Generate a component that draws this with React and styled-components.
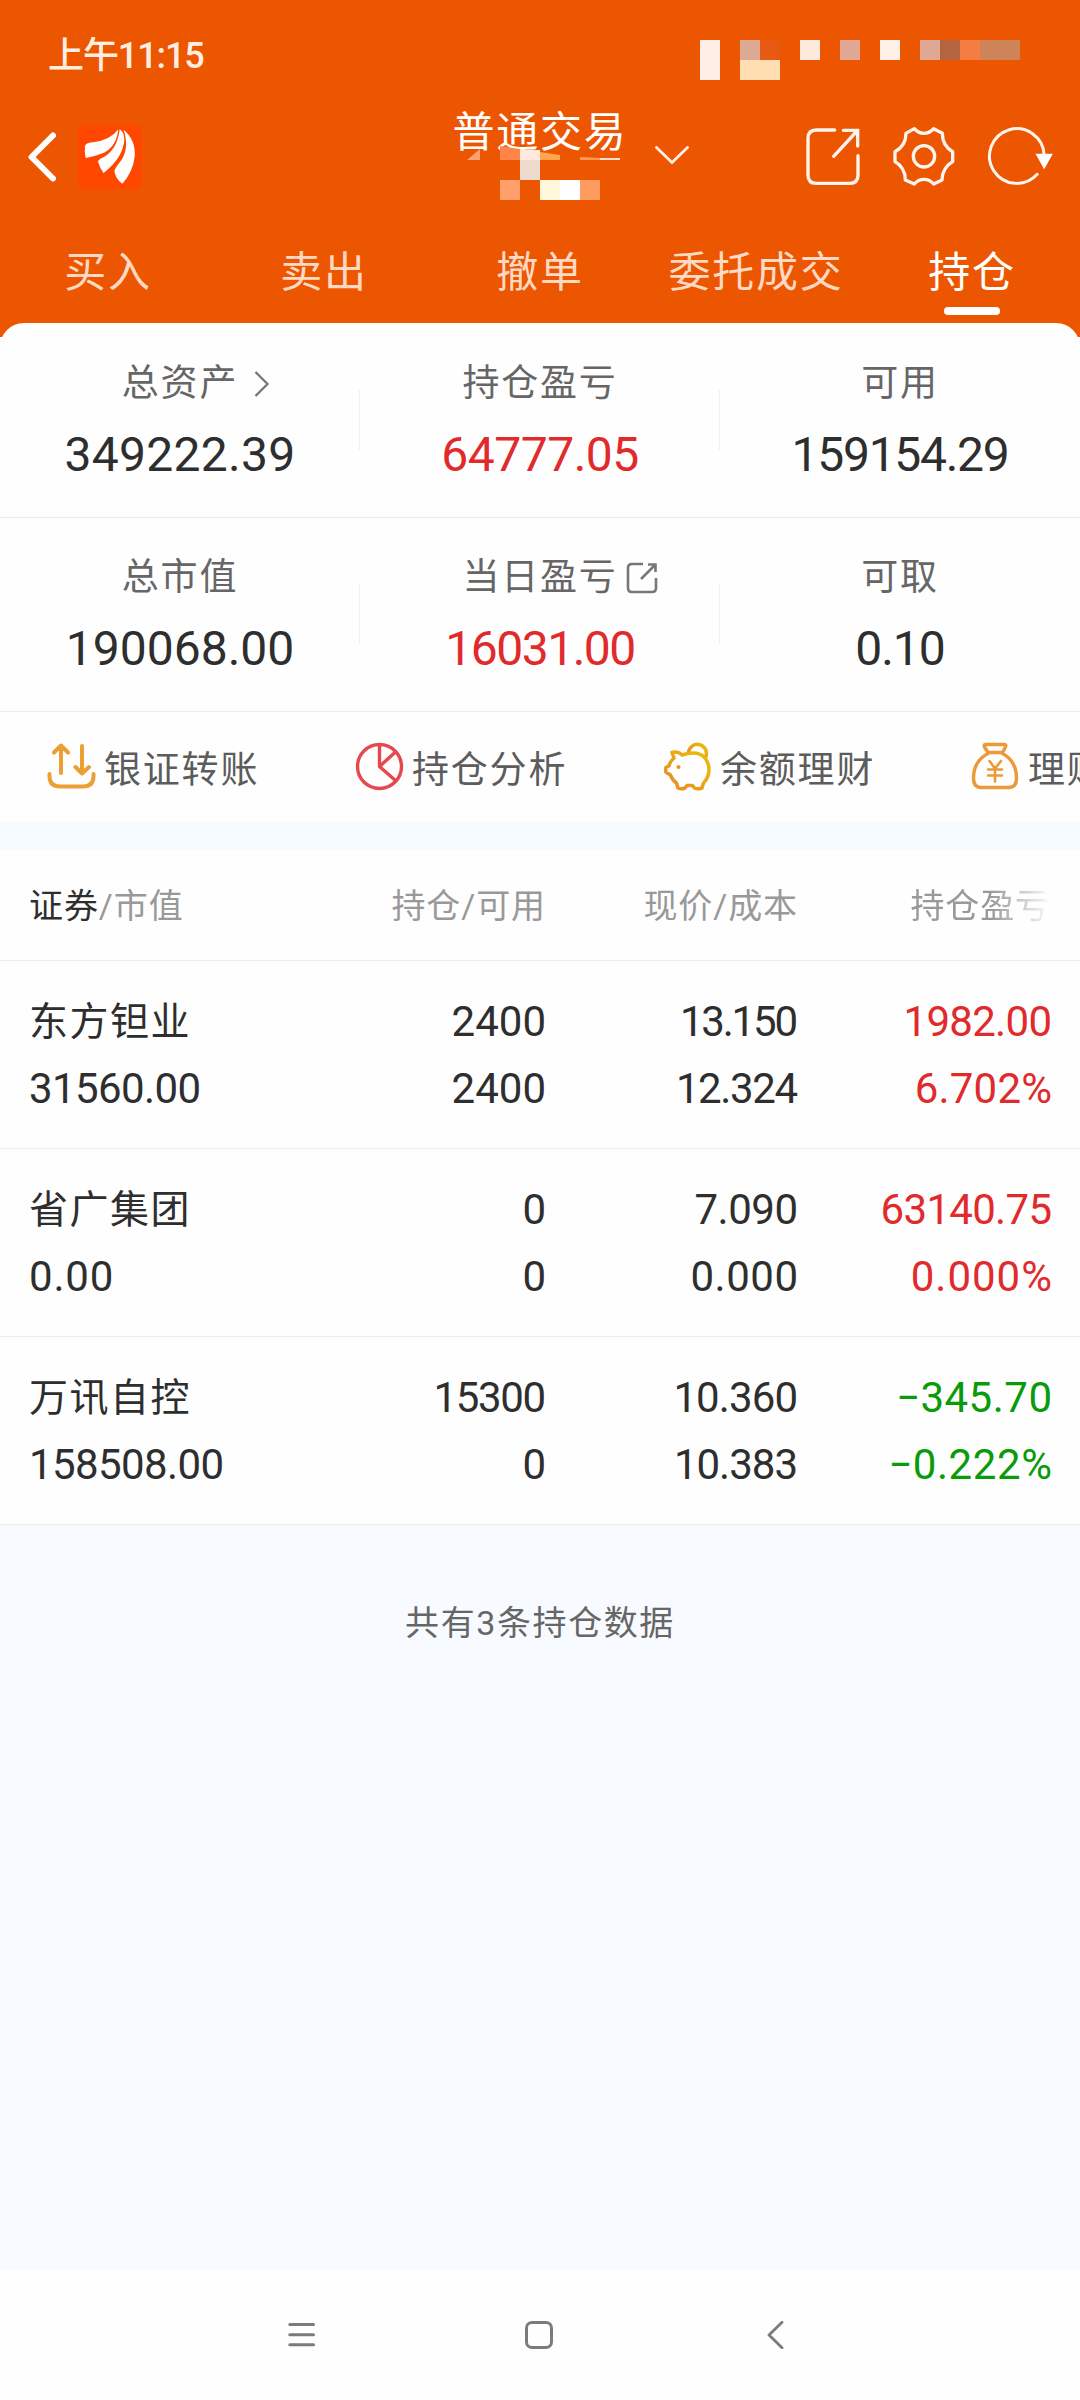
import React from "react";
import styled, { createGlobalStyle } from "styled-components";

const metrics = [
    [
        { label: "总资产", value: "349222.39", spacing: 0.3, icon: "arrow" },
        { label: "持仓盈亏", value: "64777.05", spacing: -0.5, color: "#e12a2c" },
        { label: "可用", value: "159154.29", spacing: -1.3 },
    ],
    [
        { label: "总市值", value: "190068.00", spacing: 0 },
        { label: "当日盈亏", value: "16031.00", spacing: -1.5, color: "#e12a2c", icon: "share" },
        { label: "可取", value: "0.10", spacing: -1 },
    ],
];

const actions = [
    { label: "银证转账", icon: <TransferIcon /> },
    { label: "持仓分析", icon: <PieIcon /> },
    { label: "余额理财", icon: <PiggyIcon /> },
    { label: "理财", icon: <BagIcon /> },
];

// each cell is [first line, its spacing, second line, its spacing]
const holdings = [
    {
        name: "东方钽业",
        value: ["31560.00", -0.6],
        amount: ["2400", 0, "2400", 0],
        price: ["13.150", -2.2, "12.324", -1.4],
        profit: ["1982.00", -0.7, "6.702%", 0.2],
        color: "#e12a2c",
    },
    {
        name: "省广集团",
        value: ["0.00", 0.8],
        amount: ["0", 0, "0", 0],
        price: ["7.090", -0.5, "0.000", 0.5],
        profit: ["63140.75", -0.7, "0.000%", 1],
        color: "#e12a2c",
    },
    {
        name: "万讯自控",
        value: ["158508.00", -0.6],
        amount: ["15300", -1.4, "0", 0],
        price: ["10.360", -0.9, "10.383", -1],
        profit: ["−345.70", 0.5, "−0.222%", 0.6],
        color: "#0a9b0a",
    },
];

const tabs = ["买入", "卖出", "撤单", "委托成交", "持仓"];

function App() {
    return (
        <>
            <GlobalStyle />
            <Page>
                <Header>
                    <StatusBar>
                        <Clock>上午11:15</Clock>
                        <StatusBlocks />
                    </StatusBar>
                    <NavBar>
                        <NavLeft>
                            <BackIcon />
                            <Logo />
                        </NavLeft>
                        <TitleBox>
                            <Title>普通交易</Title>
                            <TitleBlocks />
                            <DownIcon />
                        </TitleBox>
                        <NavRight>
                            <ShareIcon />
                            <GearIcon />
                            <RefreshIcon />
                        </NavRight>
                    </NavBar>
                    <Tabs>
                        {tabs.map((tab) => (
                            <Tab key={tab} $active={tab === "持仓"}>
                                {tab}
                            </Tab>
                        ))}
                    </Tabs>
                </Header>
                <Card>
                    {metrics.map((row, i) => (
                        <MetricRow key={i}>
                            {row.map((item) => (
                                <Metric key={item.label}>
                                    <MetricLabel>
                                        {item.label}
                                        {item.icon === "arrow" && <RightIcon />}
                                        {item.icon === "share" && <SmallShareIcon />}
                                    </MetricLabel>
                                    <MetricValue $color={item.color} $spacing={item.spacing}>
                                        {item.value}
                                    </MetricValue>
                                </Metric>
                            ))}
                        </MetricRow>
                    ))}
                    <Actions>
                        {actions.map((action) => (
                            <Action key={action.label}>
                                {action.icon}
                                {action.label}
                            </Action>
                        ))}
                    </Actions>
                </Card>
                <Gap />
                <TableHead>
                    <HeadCell>
                        <Strong>证券</Strong>/市值
                    </HeadCell>
                    <HeadCell>持仓/可用</HeadCell>
                    <HeadCell>现价/成本</HeadCell>
                    <HeadCell $fade>持仓盈亏</HeadCell>
                </TableHead>
                {holdings.map((item) => (
                    <TableRow key={item.name}>
                        <Cell>
                            <Name>{item.name}</Name>
                            <Num $spacing={item.value[1]}>{item.value[0]}</Num>
                        </Cell>
                        <NumCell data={item.amount} />
                        <NumCell data={item.price} />
                        <NumCell data={item.profit} color={item.color} />
                    </TableRow>
                ))}
                <Footer>共有3条持仓数据</Footer>
                <SystemBar>
                    <svg width="28" height="28" viewBox="0 0 28 28" stroke="#7b7b7b" strokeWidth="3" strokeLinecap="round">
                        <path d="M1.8 3.5H25.5M1.8 13.8H25.5M1.8 23.8H25.5" />
                    </svg>
                    <svg width="28" height="28" viewBox="0 0 28 28" fill="none" stroke="#7b7b7b" strokeWidth="3">
                        <rect x="1.5" y="1.5" width="25" height="25" rx="5.5" />
                    </svg>
                    <svg width="28" height="28" viewBox="0 0 28 28" fill="none" stroke="#7b7b7b" strokeWidth="2.8" strokeLinecap="round" strokeLinejoin="round">
                        <path d="M20 1.3L7 14L20 26.7" />
                    </svg>
                </SystemBar>
            </Page>
        </>
    );
}

function NumCell({ data, color }) {
    return (
        <Cell $right $color={color}>
            <Num $spacing={data[1]}>{data[0]}</Num>
            <Num $spacing={data[3]}>{data[2]}</Num>
        </Cell>
    );
}

function StatusBlocks() {
    return (
        <StatusSvg width="320" height="40" shapeRendering="crispEdges">
            <rect x="0" width="20" height="40" fill="#ffeee6" />
            <rect x="40" width="20" height="20" fill="#dba994" />
            <rect x="60" width="20" height="20" fill="#e85a14" />
            <rect x="40" y="20" width="40" height="20" fill="#ffdfb2" />
            <rect x="100" width="20" height="20" fill="#fee9dd" />
            <rect x="140" width="20" height="20" fill="#e0a892" />
            <rect x="180" width="20" height="20" fill="#fff0e5" />
            <rect x="220" width="20" height="20" fill="#dfa892" />
            <rect x="240" width="20" height="20" fill="#b4643e" />
            <rect x="260" width="20" height="20" fill="#f47d42" />
            <rect x="280" width="40" height="20" fill="#cd8459" />
        </StatusSvg>
    );
}

function TitleBlocks() {
    return (
        <TitleSvg width="160" height="60" viewBox="465 140 160 60">
            <path d="M467 160L480 149V160Z" fill="#ffa070" />
            <path d="M500 146L520 149V160H500Z" fill="#ff8447" />
            <path d="M540 152L560 155V160H540Z" fill="#ffa64e" />
            <path d="M580 157L600 158V160H580Z" fill="#ff9a55" />
            <path d="M600 158H620V160H600Z" fill="#ffe0cc" />
            <rect x="520" y="150" width="20" height="10" fill="#ffeadc" />
            <rect x="520" y="160" width="20" height="20" fill="#efdace" />
            <rect x="500" y="180" width="20" height="20" fill="#ff9f6b" />
            <rect x="540" y="180" width="20" height="20" fill="#fff7dc" />
            <rect x="560" y="180" width="20" height="20" fill="#ffffff" />
            <rect x="580" y="180" width="20" height="20" fill="#fd9b60" />
        </TitleSvg>
    );
}

function BackIcon() {
    return (
        <svg width="28" height="50" viewBox="0 0 28 50" fill="none" stroke="#fff" strokeWidth="6" strokeLinecap="round" strokeLinejoin="round">
            <path d="M25 3.5L3.5 25L25 46.5" />
        </svg>
    );
}

function Logo() {
    return (
        <svg width="64" height="64" viewBox="237 375 192 192">
            <rect x="237" y="375" width="192" height="192" rx="14" fill="#ff4700" />
            <g fill="#fff">
                <path d="M258 437Q262 428 283 427Q335 420 358 388Q352 440 315 458Q295 466 260 474Q256 455 258 437Z" />
                <path d="M362 388Q380 398 375 430Q366 470 340 495Q325 510 314 519Q302 505 297 484Q300 477 315 471Q355 448 362 388Z" />
                <path d="M374 389Q411 420 407 470Q402 515 370 551Q350 538 346 512Q350 502 360 490Q394 450 374 389Z" />
            </g>
        </svg>
    );
}

function DownIcon() {
    return (
        <DownSvg width="34" height="20" viewBox="0 0 34 20" fill="none" stroke="#ffeee4" strokeWidth="2.8" strokeLinecap="round">
            <path d="M1.5 1.5L17 16.5L32.5 1.5" />
        </DownSvg>
    );
}

function ShareIcon() {
    return (
        <svg width="56" height="60" viewBox="374 374 168 180" fill="none" stroke="#fff4ee" strokeWidth="10" strokeLinecap="round">
            <path d="M463 386H408Q383 386 383 411V521Q383 546 408 546H508Q533 546 533 521V463" />
            <path d="M489 387H532V434M530 389L460 465" />
        </svg>
    );
}

function GearIcon() {
    return (
        <svg width="64" height="62" viewBox="638 371 192 186" fill="none" stroke="#fff4ee" strokeWidth="10" strokeLinejoin="round">
            <path d="M705 382Q717 396 734 396Q751 396 763 382L789 396Q789 434 820 451V481Q789 499 788 536L763 548Q751 534 734 534Q717 534 705 548L678 536Q678 499 647 481V451Q680 434 680 396Z" />
            <circle cx="734" cy="465" r="32" />
        </svg>
    );
}

function RefreshIcon() {
    return (
        <svg width="67" height="60" viewBox="918 377 200 180">
            <path d="M1068 522A82 82 0 1 1 1089 464" fill="none" stroke="#fff4ee" strokeWidth="9" strokeLinecap="round" />
            <path d="M1063 460H1115L1089 507Z" fill="#fff" />
        </svg>
    );
}

function RightIcon() {
    return (
        <LabelSvg width="16" height="26" viewBox="0 0 16 26" fill="none" stroke="#777" strokeWidth="2.3" $left={16} $right={-32}>
            <path d="M1.5 1L13.5 13L1.5 25" />
        </LabelSvg>
    );
}

function SmallShareIcon() {
    return (
        <LabelSvg width="32" height="32" viewBox="0 0 32 32" fill="none" stroke="#777" strokeWidth="2.6" $left={8} $right={-40}>
            <path d="M17 2H6Q2 2 2 6V26Q2 30 6 30H26Q30 30 30 26V16" />
            <path d="M22 2.5H29.500V10M29.500 2.500L15 17" />
        </LabelSvg>
    );
}

function TransferIcon() {
    return (
        <svg width="50" height="50" viewBox="46 742 50 50" fill="none" stroke="#eb9f34" strokeWidth="4" strokeLinecap="round" strokeLinejoin="round">
            <path d="M61 773V746M54 752.5L61 745.5L68 752.5M82 746V773M75.5 767L82 773.5L89 767" />
            <path d="M49.5 774V776Q49.5 786.5 60 786.5H83Q93.5 786.5 93.5 776V774" />
        </svg>
    );
}

function PieIcon() {
    return (
        <svg width="50" height="50" viewBox="354 742 50 50" fill="none" stroke="#e5484f" strokeWidth="3.4" strokeLinejoin="round">
            <circle cx="379.5" cy="766.5" r="22" />
            <path d="M379.5 745V766.5L396 751.5M379.5 766.5L396 781" />
        </svg>
    );
}

function PiggyIcon() {
    return (
        <svg width="50" height="50" viewBox="662 742 50 50" fill="none" stroke="url(#gold)" strokeWidth="3.5" strokeLinejoin="round" strokeLinecap="round">
            <defs>
                <linearGradient id="gold" x1="0" y1="1" x2="1" y2="0">
                    <stop offset="0.2" stopColor="#ec9126" />
                    <stop offset="0.8" stopColor="#eab60d" />
                </linearGradient>
            </defs>
            <path d="M688.5 753A9 9 0 1 1 705.5 757.5" />
            <path d="M672 752.5Q678 751 682 755Q698 750 705 758Q711 766 708 776Q706 781 703.5 783L702 788Q698 789.5 694.5 788L692.5 785.5H687L685 788Q681 789.5 678 788L676.5 783Q672 780 670.5 775L665.8 772V767.5L669 766Q669.5 762 674 758Z" />
            <circle cx="678.5" cy="767" r="2" fill="#ec9126" stroke="none" />
        </svg>
    );
}

function BagIcon() {
    return (
        <svg width="50" height="50" viewBox="970 742 50 50" fill="none" stroke="#ec9a38" strokeWidth="3.4" strokeLinejoin="round" strokeLinecap="round">
            <path d="M985.5 744.5H1004.5Q1006.5 744.5 1005.5 747L1002.5 752.5H988L984.5 747Q983.5 744.5 985.5 744.5Z" />
            <path d="M988 753.5Q973.5 761 973.5 778Q973.5 787.5 981 787.5H1009Q1016.5 787.5 1016.5 778Q1016.5 761 1002.5 753.5" />
            <path d="M989.5 761L995 768.5L1001 761M995 769V781.5M988 769.5H1002M988 775.5H1002" strokeWidth="2.6" />
        </svg>
    );
}

export default App;

const GlobalStyle = createGlobalStyle`
    body {
        margin: 0;
        background: #fdfdfd;
        font-family: Roboto, "Noto Sans CJK SC", sans-serif;
    }
`;
const Page = styled.div`
    width: 1080px;
    height: 2400px;
    display: flex;
    flex-direction: column;
    overflow: hidden;
    background: #f7fbff;
`;
const Header = styled.div`
    height: 337px;
    flex-shrink: 0;
    background: #ed5600;
`;
const StatusBar = styled.div`
    height: 110px;
    display: flex;
    align-items: center;
    justify-content: space-between;
    padding: 0 60px 0 48px;
    box-sizing: border-box;
`;
const Clock = styled.div`
    margin-top: 2px;
    font-size: 36px;
    font-weight: 500;
    line-height: 40px;
    letter-spacing: -1.1px;
    color: #ffeee2;
`;
const StatusSvg = styled.svg`
    margin-top: 10px;
`;
const NavBar = styled.div`
    height: 92px;
    display: grid;
    grid-template-columns: 400px 280px 400px;
    grid-template-rows: 92px;
`;
const NavLeft = styled.div`
    display: flex;
    align-items: center;
    gap: 22px;
    padding: 2px 0 0 28px;
`;
const TitleBox = styled.div`
    position: relative;
    display: flex;
    align-items: center;
    justify-content: center;
    height: 92px;
    padding-bottom: 46px;
    box-sizing: border-box;
`;
const Title = styled.div`
    font-size: 42px;
    line-height: 44px;
    letter-spacing: 1.8px;
    color: #fff;
`;
const TitleSvg = styled.svg`
    position: absolute;
    left: 65px;
    top: 30px;
`;
const DownSvg = styled.svg`
    margin: 46px -61px 0 27px;
`;
const NavRight = styled.div`
    display: flex;
    align-items: center;
    justify-content: flex-end;
    gap: 31px;
    padding-right: 26px;
`;
const Tabs = styled.div`
    height: 121px;
    display: grid;
    grid-template-columns: repeat(5, 1fr);
`;
const Tab = styled.div`
    display: flex;
    flex-direction: column;
    align-items: center;
    justify-content: flex-end;
    gap: 12px;
    padding-bottom: 8px;
    font-size: 42px;
    line-height: 44px;
    letter-spacing: 1.8px;
    color: ${(props) => (props.$active ? "#fff" : "#ffd9c4")};

    &::after {
        content: "";
        width: 56px;
        height: 8px;
        border-radius: 4px;
        background: ${(props) => (props.$active ? "#fff" : "transparent")};
    }
`;
const Card = styled.div`
    height: 499px;
    flex-shrink: 0;
    margin-top: -14px;
    padding-top: 1px;
    box-sizing: border-box;
    border-radius: 24px 24px 0 0;
    background: #fefefe;
`;
const MetricRow = styled.div`
    height: 194px;
    display: grid;
    grid-template-columns: repeat(3, 1fr);
    box-sizing: border-box;
    border-bottom: 1px solid #ebebeb;
`;
const Metric = styled.div`
    display: flex;
    flex-direction: column;
    align-items: center;
    padding-top: 38px;
    background: linear-gradient(#f0f0f0, #f0f0f0) no-repeat right 66px / 1px 60px;

    &:last-child {
        background: none;
    }
`;
const MetricLabel = styled.div`
    display: flex;
    align-items: center;
    font-size: 37px;
    line-height: 44px;
    letter-spacing: 1.8px;
    color: #666;
`;
const LabelSvg = styled.svg`
    margin-left: ${(props) => props.$left}px;
    margin-right: ${(props) => props.$right}px;
`;
const MetricValue = styled.div`
    margin-top: 21px;
    font-size: 48px;
    line-height: 56px;
    letter-spacing: ${(props) => props.$spacing}px;
    color: ${(props) => props.$color || "#2e2e2e"};
`;
const Actions = styled.div`
    height: 110px;
    display: flex;
    padding-left: 46px;
    overflow: hidden;
`;
const Action = styled.div`
    width: 308px;
    flex-shrink: 0;
    display: flex;
    align-items: center;
    gap: 8px;
    font-size: 37px;
    letter-spacing: 1.8px;
    white-space: nowrap;
    color: #5c5c5c;
`;
const Gap = styled.div`
    height: 28px;
    flex-shrink: 0;
    background: #f5faff;
`;
const TableHead = styled.div`
    height: 111px;
    flex-shrink: 0;
    display: grid;
    grid-template-columns: 267px 250px 252px 254px;
    align-items: center;
    padding: 1px 28px 0 29px;
    box-sizing: border-box;
    border-bottom: 1px solid #ebebeb;
    background: #fefefe;
`;
const HeadCell = styled.div`
    font-size: 34px;
    letter-spacing: 0.9px;
    line-height: 44px;
    color: #999;
    text-align: right;
    padding-right: ${(props) => (props.$fade ? 2 : 0)}px;
    mask-image: ${(props) =>
        props.$fade ? "linear-gradient(to right, #000 76%, transparent 100%)" : "none"};

    &:first-child {
        text-align: left;
    }
`;
const Strong = styled.span`
    color: #2e2e2e;
`;
const TableRow = styled.div`
    height: 188px;
    flex-shrink: 0;
    display: grid;
    grid-template-columns: 267px 250px 252px 254px;
    padding: 27px 28px 0 29px;
    box-sizing: border-box;
    border-bottom: 1px solid #ebecee;
    background: #fefefe;
`;
const Cell = styled.div`
    display: flex;
    flex-direction: column;
    align-items: ${(props) => (props.$right ? "flex-end" : "flex-start")};
    color: ${(props) => props.$color || "#2e2e2e"};
`;
const Name = styled.div`
    padding-top: 1px;
    font-size: 39px;
    line-height: 66px;
    letter-spacing: 1.5px;
`;
const Num = styled.div`
    font-size: 42px;
    line-height: 67px;
    letter-spacing: ${(props) => props.$spacing}px;
    margin-right: ${(props) => -props.$spacing}px;
`;
const Footer = styled.div`
    flex: 1;
    padding-top: 76px;
    font-size: 34px;
    line-height: 44px;
    letter-spacing: 1.6px;
    text-align: center;
    color: #666;
`;
const SystemBar = styled.div`
    height: 130px;
    flex-shrink: 0;
    display: flex;
    justify-content: center;
    align-items: center;
    gap: 209px;
    padding-right: 3px;
    box-sizing: border-box;
    background: #fefefe;
`;
